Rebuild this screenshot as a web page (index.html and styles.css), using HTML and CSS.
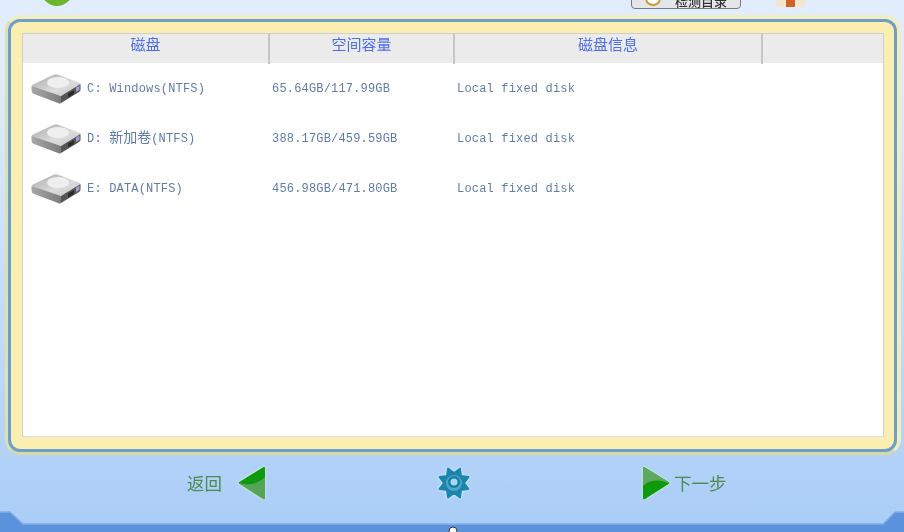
FILE: index.html
```html
<!DOCTYPE html>
<html lang="zh">
<head>
<meta charset="utf-8">
<title>磁盘</title>
<link rel="stylesheet" href="styles.css">
</head>
<body>
<div class="page">
  <header class="top">
    <span class="logo"></span>
    <span class="tool-btn">
      <svg class="tool-icon" viewBox="0 0 20 12" width="20" height="12"><path d="M2 0h16l-2 6a7 6 0 0 1-12 0z" fill="#fff" stroke="#c89a3a" stroke-width="2"/></svg>
      <span class="tool-text">检测目录</span>
    </span>
    <span class="gift"><span class="gift-band"></span></span>
  </header>

  <main class="frame">
    <div class="frame-inner">
      <section class="table">
        <div class="row head">
          <div class="th">磁盘</div>
          <div class="th">空间容量</div>
          <div class="th">磁盘信息</div>
          <div class="th last"></div>
        </div>
        <div class="row item">
          <div class="td name">
            <svg class="drive" width="50" height="31" viewBox="0 0 50 31"><use href="#hdd"/></svg>
            <span class="label">C: Windows(NTFS)</span>
          </div>
          <div class="td">65.64GB/117.99GB</div>
          <div class="td">Local fixed disk</div>
        </div>
        <div class="row item">
          <div class="td name">
            <svg class="drive" width="50" height="31" viewBox="0 0 50 31"><use href="#hdd"/></svg>
            <span class="label">D: <span class="cjk">新加卷</span>(NTFS)</span>
          </div>
          <div class="td">388.17GB/459.59GB</div>
          <div class="td">Local fixed disk</div>
        </div>
        <div class="row item">
          <div class="td name">
            <svg class="drive" width="50" height="31" viewBox="0 0 50 31"><use href="#hdd"/></svg>
            <span class="label">E: DATA(NTFS)</span>
          </div>
          <div class="td">456.98GB/471.80GB</div>
          <div class="td">Local fixed disk</div>
        </div>
      </section>
    </div>
  </main>

  <footer class="footer">
    <div class="nav back">
      <span>返回</span>
      <svg class="arrow" width="27" height="34" viewBox="0 0 27 34">
        <path d="M25 1.500 1.500 16Q0 17 1.500 18L25 33Q27 34 27 32V3Q27 0 25 1.500z" fill="#55a455"/>
        <path d="M25 1.500 1.500 16Q0 17 2 17.200Q17 21 27 11V3Q27 0 25 1.500z" fill="#0d9a0d"/>
      </svg>
    </div>
    <svg class="gear" width="34" height="34" viewBox="0 0 34 34">
      <polygon transform="rotate(22.500 17 17)" points="32.500,17 26.200,20.800 28,28 20.800,26.200 17,32.500 13.200,26.200 6,28 7.800,20.800 1.500,17 7.800,13.200 6,6 13.200,7.800 17,1.500 20.800,7.800 28,6 26.200,13.200" fill="#1b85ad" stroke="#1b85ad" stroke-width="2" stroke-linejoin="round"/>
      <circle cx="17" cy="17" r="8" fill="#4ba6c8"/>
      <circle cx="17" cy="16" r="6" fill="#157fa7"/>
      <circle cx="17" cy="16" r="3.500" fill="#a8d8ec"/>
    </svg>
    <div class="nav next">
      <svg class="arrow" width="27" height="34" viewBox="0 0 27 34">
        <path d="M2 1.500 25.500 16Q27 17 25.500 18L2 33Q0 34 0 32V3Q0 0 2 1.500z" fill="#0d9a0d"/>
        <path d="M2 1.500 25.500 16Q27 17 25 17Q10 11 0 20V3Q0 0 2 1.500z" fill="#5fa85f"/>
      </svg>
      <span>下一步</span>
    </div>
  </footer>

  <svg class="base" width="904" height="21" viewBox="0 0 904 21">
    <path d="M0 1H10L23 13H883L895 1H904V21H0z" fill="#5a93dc"/>
    <path d="M0 1H10L23 13H883L895 1H904" fill="none" stroke="#84ade6" stroke-width="1.500"/>
    <circle cx="453" cy="20" r="4" fill="#fff" stroke="#333" stroke-width="1"/>
  </svg>

  <svg class="defs" width="0" height="0">
    <defs>
      <linearGradient id="topface" x1="0" y1="0" x2="1" y2="1">
        <stop offset="0" stop-color="#a8a8a8"/>
        <stop offset=".6" stop-color="#dcdcdc"/>
        <stop offset="1" stop-color="#c4c4c4"/>
      </linearGradient>
      <linearGradient id="sideface" x1="0" y1="0" x2="1" y2="0">
        <stop offset="0" stop-color="#a8a8a8"/>
        <stop offset="1" stop-color="#7c7c7c"/>
      </linearGradient>
      <g id="hdd">
        <path d="M1 12 22 2Q25 0.500 28 2L49 10Q50 11 48 12L32 22Q30 23 28 22.500L2 14Q0 13 1 12z" fill="url(#topface)"/>
        <ellipse cx="27" cy="9.500" rx="11" ry="5.500" fill="#efefef"/>
        <path d="M0.500 13 30 23V30Q29 31 27 30L3 21Q0.500 20 0.500 17z" fill="url(#sideface)"/>
        <path d="M30 23 49.500 11V17Q49.500 18 48 19L30 30z" fill="#555"/>
        <path d="M37 20.500 43 17V21L37 24.500z" fill="#2c2c2c"/>
        <path d="M45 14.500 48.500 12.500V17L45 19z" fill="#9c9cd8"/>
      </g>
    </defs>
  </svg>
</div>
</body>
</html>
```

FILE: styles.css
```css
* {
  box-sizing: border-box;
}

html,
body {
  margin: 0;
  padding: 0;
}

body {
  width: 904px;
  height: 532px;
  overflow: hidden;
}

.page {
  position: relative;
  width: 904px;
  height: 532px;
  overflow: hidden;
  display: flex;
  flex-direction: column;
  background: linear-gradient(180deg, #e1edfd 0, #e0ecfc 60px, #b2d2f8 455px, #a9cdf7 532px);
  font-family: "Liberation Mono", "Noto Sans CJK SC", monospace;
  filter: blur(0.6px);
}

/* top strip: the bottoms of items cropped by the window */
.top {
  height: 15px;
  flex: none;
  display: flex;
  align-items: flex-start;
  padding-left: 41px;
}

.logo {
  width: 32px;
  height: 32px;
  margin-top: -26px;
  border-radius: 50%;
  background: #6cb52c;
  flex: none;
}

.tool-btn {
  width: 110px;
  height: 24px;
  margin: -15px 0 0 558px;
  display: flex;
  align-items: flex-end;
  gap: 12px;
  padding: 0 0 0 11px;
  border: 1px solid #7a7a7a;
  border-radius: 4px;
  background: #e4e6ea;
  flex: none;
  overflow: hidden;
}

.tool-icon {
  flex: none;
}

.tool-text {
  font: 500 13px/15px "Noto Sans CJK SC", sans-serif;
  color: #333;
  white-space: nowrap;
}

.gift {
  width: 29px;
  height: 7px;
  margin-left: 35px;
  display: flex;
  justify-content: center;
  background: #f3e6cf;
  flex: none;
}

.gift-band {
  width: 9px;
  background: #cf6326;
}

/* framed panel */
.frame {
  height: 440px;
  margin: 0 3px 0 5px;
  flex: none;
  border: solid #f0edc0;
  border-width: 4px 4px 3px 3px;
  border-bottom-color: #d6d9a6;
  border-left-color: #dfe0ad;
  border-radius: 16px;
}

.frame-inner {
  height: 100%;
  padding: 11px 10px 12px 11px;
  border: 3px solid #6f9fc8;
  border-radius: 12px;
  background: #faefb0;
}

.table {
  height: 100%;
  background: #fff;
  border: 1px solid #cfcfcf;
  border-bottom-color: #dcdcdc;
}

.row {
  display: grid;
  grid-template-columns: 247px 185px 308px 1fr;
}

.head {
  height: 29px;
  background: #ebebeb;
}

.th {
  display: flex;
  align-items: center;
  justify-content: center;
  padding-bottom: 10px;
  border-right: 2px solid #c6c6c6;
  font: 15px/20px "Noto Sans CJK SC", sans-serif;
  color: #4d6fe8;
}

.th.last {
  border-right: 0;
}

.item {
  height: 50px;
  align-items: center;
}

.td {
  padding: 1px 0 0 2px;
  font-size: 12px;
  line-height: 16px;
  letter-spacing: 0.18px;
  color: #5f7da9;
  white-space: nowrap;
}

.name {
  display: flex;
  align-items: center;
  gap: 6px;
  padding: 0 0 0 8px;
}

.label {
  margin-top: 1px;
}

.cjk {
  font-family: "Noto Sans CJK SC", sans-serif;
  font-size: 14px;
  line-height: 0;
  letter-spacing: 0;
}

.drive {
  flex: none;
}

/* bottom navigation */
.footer {
  flex: 1;
  display: flex;
  align-items: center;
  padding: 0 0 21px 187px;
  font: 17.500px/24px "Noto Sans CJK SC", sans-serif;
  color: #4d8c50;
}

.nav {
  display: flex;
  align-items: center;
}

.back {
  gap: 16px;
}

.next {
  gap: 4px;
  margin-left: 172px;
}

.gear {
  margin-left: 172px;
  flex: none;
  filter: drop-shadow(0 0 1.500px #e6f5ff);
}

.arrow {
  flex: none;
  filter: drop-shadow(0 0 1.500px #d8f5b8);
}

/* base bar overlays the footer */
.base {
  position: absolute;
  left: 0;
  bottom: 0;
}

.defs {
  position: absolute;
}
```
